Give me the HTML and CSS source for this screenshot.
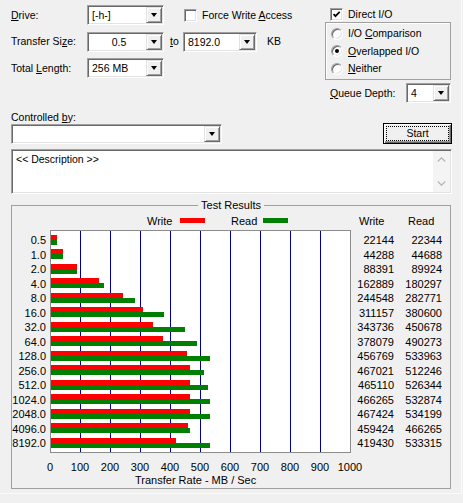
FILE: index.html
```html
<!DOCTYPE html>
<html lang="en">
  <head>
    <meta charset="UTF-8" />
    <title>Disk Benchmark</title>
    <link rel="stylesheet" href="styles.css">
  </head>
  <body>
    <div class="dlg">
      <div class="top">
        <div class="params">
          <span class="lbl"><u>D</u>rive:</span>
          <div class="combo"><span class="val">[-h-]</span><span class="drop"></span></div>
          <label class="check force"><span class="chk"></span><span>Force Write <u>A</u>ccess</span></label>

          <span class="lbl">Transfer Si<u>z</u>e:</span>
          <div class="combo"><span class="val center">0.5</span><span class="drop"></span></div>
          <span class="to"><u>t</u>o</span>
          <div class="combo"><span class="val">8192.0</span><span class="drop"></span></div>
          <span class="kb">KB</span>

          <span class="lbl">Total <u>L</u>ength:</span>
          <div class="combo"><span class="val">256 MB</span><span class="drop"></span></div>
        </div>

        <div class="io">
          <label class="check">
            <span class="chk"><svg width="7" height="7" viewBox="0 0 7 7"><polyline points="0.5,3 2.5,5.2 6.7,0.8" fill="none" stroke="#000" stroke-width="1.8"/></svg></span><span>Direct I/O</span>
          </label>
          <div class="io-group">
            <label class="radio"><span class="rad"></span><span>I/O <u>C</u>omparison</span></label>
            <label class="radio"><span class="rad on"></span><span><u>O</u>verlapped I/O</span></label>
            <label class="radio"><span class="rad"></span><span><u>N</u>either</span></label>
          </div>
          <div class="queue">
            <span><u>Q</u>ueue Depth:</span>
            <div class="combo small"><span class="val">4</span><span class="drop"></span></div>
          </div>
        </div>
      </div>

      <div class="ctl">
        <div>
          <label class="ctl-lbl">Controlled <u>b</u>y:</label>
          <div class="combo wide"><span class="val"></span><span class="drop"></span></div>
        </div>
        <button class="start"><span>Start</span></button>
      </div>

      <div class="desc">
        <div class="desc-text">&lt;&lt; Description &gt;&gt;</div>
        <div class="vscroll">
          <span><svg width="9" height="5" viewBox="0 0 9 5"><polyline points="0.8,4.5 4.5,0.8 8.2,4.5" fill="none" stroke="#b4b4b4" stroke-width="1.2"/></svg></span>
          <span><svg width="9" height="5" viewBox="0 0 9 5"><polyline points="0.8,0.5 4.5,4.2 8.2,0.5" fill="none" stroke="#b4b4b4" stroke-width="1.2"/></svg></span>
        </div>
      </div>

      <fieldset class="results">
        <legend>Test Results</legend>
        <div class="chart-head">
          <span>Write</span>
          <span class="swatch write"></span>
          <span>Read</span>
          <span class="swatch read"></span>
          <span>Write</span>
          <span>Read</span>
        </div>
        <div class="chart-body">
          <div class="ylabels" id="ylabels"></div>
          <div class="plot" id="plot"></div>
          <div class="vals" id="vals"></div>
        </div>
        <div class="xaxis">
          <span>0</span><span>100</span><span>200</span><span>300</span><span>400</span><span>500</span>
          <span>600</span><span>700</span><span>800</span><span>900</span><span>1000</span>
        </div>
        <div class="xtitle">Transfer Rate - MB / Sec</div>
      </fieldset>
    </div>

    <script type="text/javascript">
      var sizes = ['0.5', '1.0', '2.0', '4.0', '8.0', '16.0', '32.0', '64.0', '128.0',
        '256.0', '512.0', '1024.0', '2048.0', '4096.0', '8192.0'];
      var writes = [22144, 44288, 88391, 162889, 244548, 311157, 343736, 378079, 456769,
        467021, 465110, 466265, 467424, 459424, 419430];
      var reads = [22344, 44688, 89924, 180297, 282771, 380600, 450678, 490273, 533963,
        512246, 526344, 532874, 534199, 466265, 533315];

      // 1000 MB/s spans 300px; first pixel is hidden by the plot border
      function barWidth(kb) {
        return Math.max(kb / 1000 * 0.3 - 1, 0).toFixed(1) + 'px';
      }

      var labels = [];
      var rows = [];
      var vals = [];
      sizes.forEach(function (size, i) {
        labels.push('<div>' + size + '</div>');
        rows.push(
          '<div class="row">' +
            '<div class="bar w" style="width:' + barWidth(writes[i]) + '"></div>' +
            '<div class="bar r" style="width:' + barWidth(reads[i]) + '"></div>' +
          '</div>'
        );
        vals.push('<div><span>' + writes[i] + '</span><span>' + reads[i] + '</span></div>');
      });
      document.getElementById('ylabels').innerHTML = labels.join('');
      document.getElementById('plot').innerHTML = rows.join('');
      document.getElementById('vals').innerHTML = vals.join('');
    </script>
  </body>
</html>
```

FILE: styles.css
```css
body {
  margin: 0;
  background: #f0f0f0;
  color: #000;
  font-family: 'Liberation Sans', Arial, sans-serif;
  font-size: 10.5px;
  line-height: 13px;
}

.dlg {
  width: 462px;
  height: 494px;
  box-sizing: border-box;
  padding-left: 11px;
  border-right: 1px solid #fafafa;
  border-bottom: 1px solid #fafafa;
}

/* sunken 3d edge shared by fields */
.combo,
.chk,
.rad,
.desc {
  box-sizing: border-box;
  background: #fff;
  border: 1px solid;
  border-color: #a0a0a0 #fff #fff #a0a0a0;
  box-shadow: inset 1px 1px #696969, inset -1px -1px #e3e3e3;
}

.top {
  display: flex;
  height: 103px;
}

.params {
  width: 314px;
  padding-top: 5px;
  display: grid;
  grid-template-columns: 76px 77px 19px 74px auto;
  grid-template-rows: repeat(3, 20px);
  row-gap: 6.5px;
  align-items: center;
  align-content: start;
}

.lbl {
  grid-column: 1;
}

.force {
  grid-column: 3 / 6;
  margin-left: 20px;
}

.to {
  padding-left: 6px;
}

.kb {
  padding-left: 10px;
}

.combo {
  display: flex;
  height: 20px;
  padding: 1px;
}

.combo .val {
  flex: 1;
  padding-left: 3px;
  line-height: 16px;
  white-space: nowrap;
}

.combo .val.center {
  text-align: center;
}

.drop {
  width: 16px;
  box-sizing: border-box;
  background: #f0f0f0;
  border: 1px solid;
  border-color: #e3e3e3 #696969 #696969 #e3e3e3;
  box-shadow: inset 1px 1px #fff, inset -1px -1px #a0a0a0;
  display: flex;
  align-items: center;
  justify-content: center;
}

.drop::before {
  content: '';
  border-top: 4px solid #000;
  border-left: 3.5px solid transparent;
  border-right: 3.5px solid transparent;
}

.combo.wide {
  width: 211px;
}

.combo.small {
  width: 45px;
}

.check {
  display: flex;
  align-items: center;
  gap: 5px;
}

.chk {
  width: 13px;
  height: 13px;
  display: flex;
  align-items: center;
  justify-content: center;
}

.io {
  width: 126px;
  padding-top: 8px;
}

.io > .check {
  height: 13px;
  padding-left: 5px;
}

.io-group {
  margin-top: 1px;
  height: 58px;
  box-sizing: border-box;
  border: 1px solid #a0a0a0;
  box-shadow: inset 1px 1px #fff;
  padding: 2px 0 0 5px;
}

.radio {
  display: flex;
  align-items: center;
  gap: 5px;
  height: 17.5px;
}

.rad {
  width: 12px;
  height: 12px;
  border-radius: 50%;
  display: flex;
  align-items: center;
  justify-content: center;
}

.rad.on::after {
  content: '';
  width: 4px;
  height: 4px;
  border-radius: 50%;
  background: #000;
}

.queue {
  display: flex;
  justify-content: space-between;
  align-items: center;
  margin-top: 3px;
  padding-left: 5px;
}

.ctl {
  display: flex;
  justify-content: space-between;
  align-items: flex-end;
  width: 441px;
  margin-top: 7px;
}

.ctl-lbl {
  display: block;
  line-height: 14px;
}

.start {
  width: 69px;
  height: 21px;
  box-sizing: border-box;
  padding: 2px;
  background: #f0f0f0;
  border: 1px solid #000;
  box-shadow: inset 1px 1px #fff, inset -1px -1px #696969, inset -2px -2px #a0a0a0;
  font: inherit;
  color: #000;
}

.start span {
  display: block;
  height: 100%;
  box-sizing: border-box;
  border: 1px dotted #000;
  line-height: 13px;
}

.desc {
  margin-top: 5px;
  width: 441px;
  height: 45px;
  padding: 1px;
  display: flex;
}

.desc-text {
  flex: 1;
  padding: 2px 3px;
}

.vscroll {
  width: 17px;
  background: #f4f4f4;
  display: flex;
  flex-direction: column;
  justify-content: space-between;
}

.vscroll span {
  height: 17px;
  display: flex;
  align-items: center;
  justify-content: center;
}

/* test results */
.results {
  margin: 5px 0 0;
  padding: 3px 0 1px;
  width: 440px;
  min-width: 0;
  box-sizing: border-box;
  border: 1px solid #a0a0a0;
  font-size: 11px;
}

.results legend {
  margin: 0 auto;
  padding: 0 3px;
  line-height: 12px;
}

.chart-head {
  display: grid;
  grid-template-columns: 33px 51px 32px 96px 49px auto;
  align-items: start;
  height: 16px;
  padding-left: 135px;
  line-height: 14px;
}

.swatch {
  width: 25px;
  height: 5px;
  margin-top: 4px;
}

.swatch.write,
.bar.w {
  background: #ff0000;
}

.swatch.read,
.bar.r {
  background: #008000;
}

.chart-body {
  display: flex;
}

.ylabels,
.vals {
  height: 223px;
  box-sizing: border-box;
  padding-top: 5px;
  display: flex;
  flex-direction: column;
}

.ylabels {
  width: 34px;
  text-align: right;
}

.ylabels div,
.vals div {
  flex: 1;
  line-height: 10px;
}

.plot {
  width: 301px;
  height: 223px;
  margin-left: 4px;
  box-sizing: border-box;
  padding-top: 4px;
  border: 1px solid #8c8c8c;
  background-color: #fff;
  background-image: repeating-linear-gradient(to right, transparent 0 29px, #0000a0 29px 30px);
  display: flex;
  flex-direction: column;
}

.plot .row {
  flex: 1;
}

.bar {
  height: 5px;
}

.vals {
  width: 91px;
}

.vals div {
  display: grid;
  grid-template-columns: 43px 48px;
  text-align: right;
}

.xaxis {
  display: grid;
  grid-template-columns: repeat(11, 30px);
  margin: 8px 0 0 23px;
  text-align: center;
  line-height: 13px;
}

.xtitle {
  margin-left: 123px;
  line-height: 13px;
}
```
